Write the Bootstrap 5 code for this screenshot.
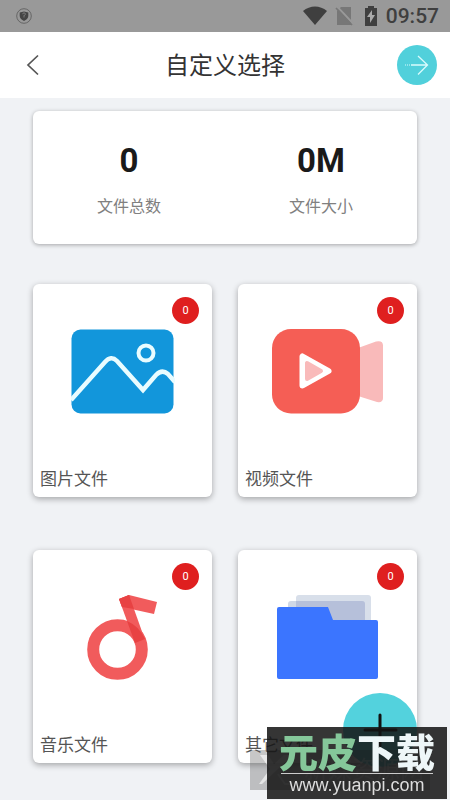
<!DOCTYPE html>
<html lang="zh-CN">
<head>
<meta charset="utf-8">
<meta name="viewport" content="width=device-width, initial-scale=1">
<title>自定义选择</title>
<link href="https://cdn.jsdelivr.net/npm/bootstrap@5.3.0/dist/css/bootstrap.min.css" rel="stylesheet">
<style>
body { font-family: Roboto, "Noto Sans CJK SC", sans-serif; background: #f0f2f5; color: #333; min-height: 100vh; overflow-x: hidden; }
svg { display: block; }
.status-bar { background: #999; height: 32px; color: #3f3f3f; font-size: 21px; line-height: 32px; padding: 0 11px 0 16px; }
.title-bar { background: #fff; height: 66px; padding: 0 13px; }
.title-bar h1 { font-size: 24px; line-height: 32px; font-weight: 400; padding-top: 2px; }
.back-btn { width: 40px; height: 40px; }
.next-btn { width: 40px; height: 40px; background: #51d0db; }
.page-body { padding: 13px 33px 0; }
.panel { background: #fff; border-radius: 6px; box-shadow: 0 1px 4px rgba(0,0,0,.32); }
.summary { padding: 30px 0 25px; }
.summary-value { font-size: 33px; line-height: 40px; font-weight: 700; color: #1a1a1a; }
.summary-label { font-size: 16px; line-height: 24px; color: #808080; margin-top: 14px; }
.tiles { margin-top: 40px; column-gap: 26px; row-gap: 53px; display: grid; grid-template-columns: 1fr 1fr; }
.tile { height: 213px; box-shadow: 0 2px 6px rgba(0,0,0,.32); }
.tile-count { width: 27px; height: 27px; top: 13px; right: 13px; padding-top: 2px; background: #df1f1f; color: #fff; font-size: 11px; }
.tile-name { font-size: 17px; line-height: 24px; color: #555; padding: 0 7px 6px; }
.tile-art { padding-top: 45px; }
.add-btn { width: 74px; height: 74px; right: 33px; bottom: 33px; background: #53d2dd; }
.mark-back { right: 20px; bottom: 10px; width: 180px; height: 40px; background: rgba(80,80,80,.32); color: rgba(255,255,255,.4); font-size: 24px; line-height: 40px; }
.mark-front { right: 3px; bottom: 1px; width: 180px; height: 72px; background: rgba(20,20,20,.86); color: #ddd; }
.mark-name { font-size: 39px; line-height: 46px; font-weight: 900; font-family: "Noto Sans CJK SC", sans-serif; color: #eef6f8; }
.mark-name span { color: #85c79a; }
.mark-site { font-family: "Liberation Sans", Arial, sans-serif; font-size: 18px; line-height: 22px; border-top: 1px solid #ccc; width: 152px; }
</style>
<script src="https://cdn.jsdelivr.net/npm/bootstrap@5.3.0/dist/js/bootstrap.bundle.min.js"></script>
</head>
<body>
<div class="status-bar d-flex align-items-center justify-content-between">
  <svg width="16" height="16" viewBox="0 0 16 16"><circle cx="8" cy="8" r="7.3" fill="none" stroke="#666"/><path d="M8 3.4 12.3 4.6V8c0 2.300-2 4-4.300 5C5.700 12 3.700 10.300 3.700 8V4.600z" fill="#444"/><path d="M8 9.500V7.500M6.600 6.200c0-1.800 2.900-1.800 2.900 0C9.500 7 8 7 8 8" fill="none" stroke="#888" stroke-width=".8"/></svg>
  <div class="d-flex align-items-center">
    <svg width="75" height="20" viewBox="0 0 75 20"><path d="M0 5C7-1 17-1 24 5L12 19z" fill="#3f3f3f"/><path d="M38 1h10v18H34V5z" fill="#777"/><path d="M34 .500l17 18" stroke="#999" stroke-width="2"/><path d="M33 2l16 17" stroke="#777" stroke-width="1.700"/><path d="M62 2h3V0h6v2h3v18H62z" fill="#3f3f3f"/><path d="M69 4l-5 7h3v6l5-8h-3z" fill="#aaa"/></svg>
    <span class="fw-medium ms-2">09:57</span>
  </div>
</div>
<header class="title-bar d-flex align-items-center justify-content-between">
  <button type="button" class="back-btn btn p-0 border-0 d-flex align-items-center justify-content-center" aria-label="返回"><svg width="26" height="26" viewBox="0 0 26 26"><path d="M18 3.500 8 13l10 9.500" fill="none" stroke="#555" stroke-width="1.700"/></svg></button>
  <h1 class="m-0">自定义选择</h1>
  <button type="button" class="next-btn btn p-0 border-0 rounded-circle" aria-label="下一步"><svg width="40" height="40" viewBox="0 0 40 40" fill="none" stroke="#d9fbfd" stroke-width="1.300"><path d="M14 20h16M21 11l9.500 9-9.500 9.500"/><path d="M8 20h5" stroke-dasharray="1 1" stroke-width="1"/></svg></button>
</header>
<main class="page-body">
  <section class="panel summary row g-0 text-center">
    <div class="col"><div class="summary-value">0</div><div class="summary-label">文件总数</div></div>
    <div class="col"><div class="summary-value">0M</div><div class="summary-label">文件大小</div></div>
  </section>
  <section class="tiles">
    <a href="#" class="panel tile position-relative d-flex flex-column justify-content-between text-decoration-none">
      <span class="tile-count position-absolute rounded-circle d-flex align-items-center justify-content-center">0</span>
      <div class="tile-art d-flex justify-content-center"><svg width="104" height="86" viewBox="0 0 104 86"><rect x=".5" y=".5" width="102" height="84" rx="9" fill="#1296db"/><path d="M0 71 34 33Q40 26 46 32L72 61 85 46Q91 40 97 45L104 53" fill="none" stroke="#e9fcff" stroke-width="4.500"/><circle cx="75" cy="24" r="7.500" fill="none" stroke="#e9fcff" stroke-width="4"/></svg></div>
      <span class="tile-name">图片文件</span>
    </a>
    <a href="#" class="panel tile position-relative d-flex flex-column justify-content-between text-decoration-none">
      <span class="tile-count position-absolute rounded-circle d-flex align-items-center justify-content-center">0</span>
      <div class="tile-art d-flex justify-content-center"><svg width="112" height="86" viewBox="0 0 112 86"><path d="M86 19 104 12.500q7-1.500 7 4V69q0 5-6 4L86 67z" fill="#f9baba"/><rect x="0" y="0" width="88" height="84.500" rx="19" fill="#f55e55"/><path d="M30.500 27.500v29l26-14.500z" fill="#fff" stroke="#fff" stroke-width="6" stroke-linejoin="round"/><path d="M35 34v16l14-8z" fill="#f9baba" stroke="#f9baba" stroke-width="4" stroke-linejoin="round"/></svg></div>
      <span class="tile-name">视频文件</span>
    </a>
    <a href="#" class="panel tile position-relative d-flex flex-column justify-content-between text-decoration-none">
      <span class="tile-count position-absolute rounded-circle d-flex align-items-center justify-content-center">0</span>
      <div class="tile-art d-flex justify-content-center"><svg width="72" height="86" viewBox="0 0 72 86"><circle cx="30.500" cy="54.500" r="24.300" fill="none" stroke="#f15b5c" stroke-width="12"/><path d="M42 0 70 7 67 19 35 12 32 4z" fill="#f15b5c"/><path d="M32 4 42 0 58 45 48 48z" fill="#f15b5c"/><path d="M32 4 42 0 47 14 35 12zM40 26Q52 31 58 44L48 48z" fill="#e84243"/></svg></div>
      <span class="tile-name">音乐文件</span>
    </a>
    <a href="#" class="panel tile position-relative d-flex flex-column justify-content-between text-decoration-none">
      <span class="tile-count position-absolute rounded-circle d-flex align-items-center justify-content-center">0</span>
      <div class="tile-art d-flex justify-content-center"><svg width="102" height="86" viewBox="0 0 102 86"><rect x="19" y="0" width="75" height="40" rx="3" fill="#d8dfea"/><rect x="11" y="6" width="77" height="40" rx="3" fill="#d0d8e6"/><path d="M19 6h66q3 0 3 3v30H19z" fill="#b6c0da"/><path d="M2 12H51L56 25H99q2 0 2 2V82q0 2-2 2H2q-2 0-2-2V14q0-2 2-2z" fill="#3b75ff"/></svg></div>
      <span class="tile-name">其它文件</span>
    </a>
  </section>
</main>
<button type="button" class="add-btn btn p-0 border-0 rounded-circle position-fixed" aria-label="添加"><svg width="74" height="74" viewBox="0 0 74 74"><path d="M37 22v31M22 37h31" stroke="#111" stroke-width="3" stroke-linecap="round"/></svg></button>
<div class="mark-back position-fixed d-flex align-items-center"><svg width="54" height="40" viewBox="0 0 54 40"><path d="M10 5h8l6 9 10-9h9L28 19 12 34H9L20 19z" fill="#fff" fill-opacity=".6"/><path d="M28 24l7 10h8" fill="none" stroke="#fff" stroke-opacity=".5" stroke-width="2"/></svg><span>新媒资源网</span></div>
<div class="mark-front position-fixed d-flex flex-column align-items-center">
  <div class="mark-name"><span>元皮</span>下载</div>
  <div class="mark-site text-center">www.yuanpi.com</div>
</div>
</body>
</html>
